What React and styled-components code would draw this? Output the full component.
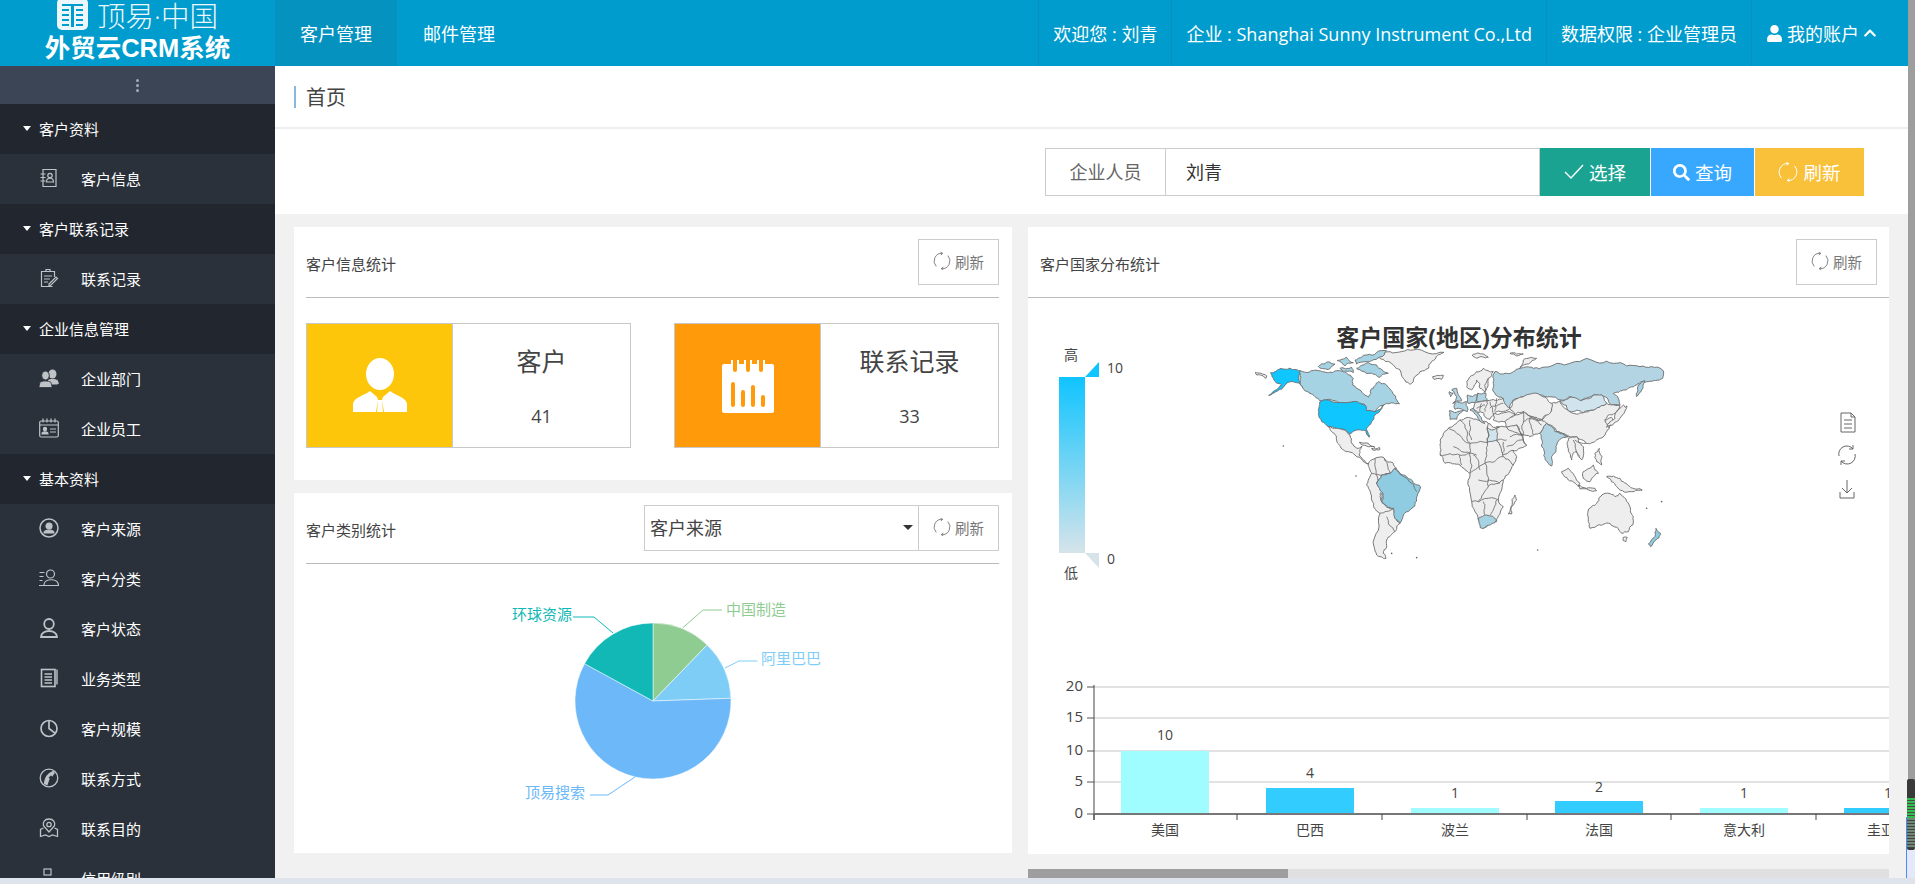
import React from "react";
import styled, { createGlobalStyle } from "styled-components";
import { FaSearch, FaUser, FaChevronUp } from "react-icons/fa";

const GlobalStyle = createGlobalStyle`
  html, body {
    margin: 0;
    height: 100%;
    overflow: hidden;
    background: #dfe3ec;
    font-family: "Open Sans", "Noto Sans CJK SC", sans-serif;
  }
  * { box-sizing: border-box; }
  svg text { font-family: "Open Sans", "Noto Sans CJK SC", sans-serif; }
`;

const Frame = styled.div`
  width: 1915px;
  height: 884px;
  display: flex;
  flex-direction: column;
  overflow: hidden;
`;
const Shell = styled.div`
  flex: 1;
  min-height: 0;
  display: flex;
`;
const Window = styled.div`
  width: 1908px;
  display: flex;
  flex-direction: column;
`;
const Rail = styled.div`
  width: 7px;
  background: #9e9e9e;
  position: relative;
`;
const RailBox = styled.div`
  position: absolute;
  left: -2px;
  right: 0;
  top: 817px;
  bottom: 0;
  background: #e3e9fa;
  border-left: 1px solid #4a8cf0;
`;
const RailThumb = styled.div`
  position: absolute;
  left: -1px;
  right: 0;
  top: 779px;
  height: 71px;
  border-radius: 2px;
  background:
    repeating-linear-gradient(#2fc04e 0 2px, #4b4b4b 2px 3px) 0 19px / 100% 20px no-repeat,
    repeating-linear-gradient(#6f8a74 0 2px, #444 2px 3px) 0 39px / 100% 30px no-repeat,
    #3a3a3a;
`;
const BottomBar = styled.div`
  height: 6px;
  background: #dfe3ec;
`;

/* top bar */
const Header = styled.header`
  height: 66px;
  flex: none;
  display: flex;
  background: #009ccd;
  color: #fff;
`;
const Brand = styled.div`
  width: 275px;
  display: flex;
  flex-direction: column;
  align-items: center;
`;
const BrandTop = styled.div`
  display: flex;
  align-items: flex-start;
  gap: 9px;
  height: 31px;
  font-size: 28.5px;
  line-height: 32px;
  font-weight: 300;
  opacity: 0.92;
`;
const BrandName = styled.div`
  font-size: 25.5px;
  line-height: 34px;
  font-weight: 700;
  white-space: nowrap;
  font-family: "Liberation Sans", "Noto Sans CJK SC", sans-serif;
`;
const NavTab = styled.div`
  width: ${(p) => p.$w}px;
  display: flex;
  align-items: center;
  justify-content: center;
  font-size: 18px;
  background: ${(p) => (p.$active ? "#0592bf" : "transparent")};
`;
const HeaderRight = styled.div`
  margin-left: auto;
  display: flex;
`;
const HeaderCell = styled.div`
  display: flex;
  align-items: center;
  gap: 4px;
  padding: 0 ${(p) => p.$right || 14}px 0 14px;
  font-size: 18px;
  white-space: nowrap;
  border-left: 1px solid #0a8fbb;
`;

/* sidebar */
const Body = styled.div`
  flex: 1;
  min-height: 0;
  display: flex;
`;
const Sidebar = styled.aside`
  width: 275px;
  flex: none;
  overflow: hidden;
  background: #2a313a;
`;
const SideToggle = styled.div`
  height: 38px;
  background: #3b4556;
  display: flex;
  flex-direction: column;
  align-items: center;
  justify-content: center;
  gap: 2px;
  span {
    width: 3px;
    height: 3px;
    border-radius: 50%;
    background: #a3abb8;
  }
`;
const SideGroup = styled.div`
  height: 50px;
  display: flex;
  align-items: center;
  background: #22262e;
  color: #fff;
  font-size: 15px;
  padding: 0 0 2px 23px;
  gap: 8px;
  &::before {
    content: "";
    border-left: 4.5px solid transparent;
    border-right: 4.5px solid transparent;
    border-top: 5px solid #fff;
  }
`;
const SideItem = styled.div`
  height: 50px;
  display: flex;
  align-items: center;
  color: #fff;
  font-size: 15px;
  padding: 0 0 2px 39px;
  gap: 22px;
  svg { width: 20px; height: 20px; flex: none; color: #bfc3c8; }
`;

/* main */
const Main = styled.main`
  flex: 1;
  min-width: 0;
  display: flex;
  flex-direction: column;
  background: #f1f1f1;
`;
const TitleBar = styled.div`
  height: 63px;
  flex: none;
  background: #fff;
  border-bottom: 2px solid #eceef2;
  padding: 20px 0 0 19px;
`;
const PageTitle = styled.div`
  height: 22px;
  border-left: 2px solid #86b8e0;
  padding-left: 10px;
  font-size: 20px;
  line-height: 24px;
  color: #444;
`;
const FilterBar = styled.div`
  height: 85px;
  flex: none;
  background: #fff;
  display: flex;
  justify-content: flex-end;
  align-items: flex-start;
  padding: 19px 43px 0 0;
`;
const InputGroup = styled.div`
  display: flex;
  height: 48px;
  width: 495px;
  border: 1px solid #ccc;
  font-size: 18px;
`;
const InputLabel = styled.div`
  width: 120px;
  display: flex;
  align-items: center;
  justify-content: center;
  padding-bottom: 2px;
  color: #666;
  border-right: 1px solid #ccc;
`;
const InputValue = styled.div`
  flex: 1;
  display: flex;
  align-items: center;
  padding: 0 0 2px 20px;
  color: #333;
`;
const ActionButton = styled.div`
  width: ${(p) => p.$w}px;
  height: 48px;
  margin-right: 1px;
  display: flex;
  align-items: center;
  justify-content: center;
  gap: 5px;
  color: #fff;
  font-size: 18.5px;
  background: ${(p) => p.$bg};
`;
const Columns = styled.div`
  flex: 1;
  min-height: 0;
  display: flex;
  gap: 16px;
  padding: 13px 19px 0;
`;
const LeftColumn = styled.div`
  width: 718px;
  flex: none;
  display: flex;
  flex-direction: column;
  gap: 13px;
`;
const RightColumn = styled.div`
  flex: 1;
  min-width: 0;
  display: flex;
  flex-direction: column;
`;
const Panel = styled.section`
  background: #fff;
  height: ${(p) => p.$h}px;
  padding: ${(p) => (p.$flush ? "0" : "0 13px 0 12px")};
  overflow: hidden;
`;
const PanelHead = styled.div`
  height: 71px;
  display: flex;
  align-items: center;
  border-bottom: 1px solid #bbb;
  padding: ${(p) => (p.$flush ? "0 12px" : "0")};
`;
const PanelTitle = styled.div`
  font-size: 15px;
  color: #444;
  margin-top: 3px;
  margin-right: auto;
`;
const Refresh = styled.div`
  width: 81px;
  height: 46px;
  display: flex;
  align-items: center;
  justify-content: center;
  gap: 4px;
  padding-bottom: 2px;
  border: 1px solid #ccc;
  color: #777;
  font-size: 14.5px;
`;
const SelectBox = styled.div`
  width: 274px;
  height: 46px;
  display: flex;
  align-items: center;
  justify-content: space-between;
  padding: 0 5px 2px;
  border: 1px solid #ccc;
  border-right: none;
  font-size: 18px;
  color: #444;
  &::after {
    content: "";
    border-left: 5px solid transparent;
    border-right: 5px solid transparent;
    border-top: 5px solid #333;
  }
`;
const StatRow = styled.div`
  display: flex;
  justify-content: space-between;
  margin-top: 25px;
`;
const StatCard = styled.div`
  width: 325px;
  height: 125px;
  display: flex;
  border: 1px solid #c8c8c8;
`;
const StatIcon = styled.div`
  width: 146px;
  flex: none;
  display: flex;
  align-items: center;
  justify-content: center;
  background: ${(p) => p.$bg};
  border-right: 1px solid #c8c8c8;
`;
const StatText = styled.div`
  flex: 1;
  display: flex;
  flex-direction: column;
  align-items: center;
  color: #444;
  padding-top: 19px;
`;
const StatLabel = styled.div`
  font-size: 25px;
  line-height: 36px;
`;
const StatValue = styled.div`
  font-size: 18px;
  line-height: 24px;
  margin-top: 25px;
`;
const ChartSvg = styled.svg`
  display: block;
`;
const HScrollTrack = styled.div`
  height: 9px;
  margin-top: 15px;
  background: #e0e0e0;
`;
const HScrollThumb = styled.div`
  width: 260px;
  height: 100%;
  background: #9e9e9e;
`;

const RefreshIcon = ({ size = 18, color = "#777" }) => (
  <svg width={size} height={size} viewBox="0 0 18 18" fill="none" stroke={color} strokeWidth="0.9">
    <path d="M3.2 14.4A7.800 7.800 0 0 1 9.500 1.300" />
    <path d="M14.800 3.600A7.800 7.800 0 0 1 8.500 16.700" />
    <path d="M7.600 0.300 9.800 1.400 7.800 3" />
    <path d="M10.400 15 8.200 16.600 10.200 17.700" />
  </svg>
);

const LogoMark = () => (
  <svg width="31" height="31" viewBox="0 0 31 31">
    <rect x="0" y="-2" width="31" height="32" rx="5" fill="#fff" />
    <path d="M5 5h21M5 10h7M19 10h7M5 15h7M19 15h7M5 20h7M19 20h7M5 25h7M19 25h7" stroke="#009ccd" strokeWidth="2.2" />
    <path d="M14 5v22h3V5" fill="#009ccd" />
  </svg>
);

/* sidebar drawings, all on a 20 box */
const stroke = { fill: "none", stroke: "currentColor", strokeWidth: 1.2 };
const icons = {
  book: (
    <svg viewBox="0 0 20 20" {...stroke}>
      <path d="M4 1.500h13v17H4zM1.500 6h5M1.500 9.500h5M1.500 13h5" />
      <circle cx="11" cy="7.500" r="2.200" />
      <path d="M7.500 14c0-5 7-5 7 0z" />
    </svg>
  ),
  clipboard: (
    <svg viewBox="0 0 20 20" {...stroke}>
      <path d="M15.500 9V3.500H2.500v15h11M7 3.500V1.500h4v2H7" />
      <path d="M5 8h8M5 11h6M5 14h4M10 16l7-7 1.500 1.500-7 7H10z" />
    </svg>
  ),
  team: (
    <svg viewBox="0 0 20 20" fill="currentColor">
      <ellipse cx="13.500" cy="6" rx="4" ry="4.500" />
      <path d="M9 12c1-1.500 8-1.500 9.500 0l1.500 3.500-2 1h-9z" />
      <ellipse cx="6.500" cy="7.500" rx="3.800" ry="4.500" stroke="#2a313a" />
      <path d="M0 18.500l1-4c.8-2 9.500-2 11 0l1 4-1 1H1z" stroke="#2a313a" strokeWidth="0.800" />
    </svg>
  ),
  badge: (
    <svg viewBox="0 0 20 20" {...stroke}>
      <rect x="0.700" y="3" width="18.600" height="16" rx="1.500" />
      <path d="M1 7h18M4 0.500v4M8 0.500v4M12 0.500v4M16 0.500v4M11 11h6M11 14h6" />
      <circle cx="6" cy="11" r="1.600" fill="currentColor" />
      <path d="M3 16c0-3 6-3 6 0z" fill="currentColor" />
    </svg>
  ),
  source: (
    <svg viewBox="0 0 20 20" {...stroke}>
      <circle cx="10" cy="10" r="9" strokeWidth="1.500" />
      <circle cx="10" cy="8" r="3" fill="currentColor" />
      <path d="M5 15c0-4 10-4 10 0z" fill="currentColor" />
    </svg>
  ),
  sort: (
    <svg viewBox="0 0 20 20" {...stroke}>
      <circle cx="11.500" cy="6" r="4" />
      <path d="M5 17c0-7 14-7 14.500 0M0 17.500h20M0.500 4.500h5M0.500 8.500h4M0.500 12.500h3" />
    </svg>
  ),
  person: (
    <svg viewBox="0 0 20 20" fill="none" stroke="currentColor" strokeWidth="1.800">
      <ellipse cx="10" cy="6" rx="4.800" ry="5" />
      <path d="M2 19c0-8 16-8 16 0z" />
    </svg>
  ),
  doc: (
    <svg viewBox="0 0 20 20" {...stroke}>
      <rect x="2.500" y="1.500" width="13.500" height="17" strokeWidth="1.600" />
      <path d="M18 1.500v15M5.500 6h7.500M5.500 9h7.500M5.500 12h7.500M5.500 15h7.500" strokeWidth="1.400" />
    </svg>
  ),
  pie: (
    <svg viewBox="0 0 20 20" fill="none" stroke="currentColor" strokeWidth="1.700">
      <circle cx="10" cy="10.500" r="8" />
      <path d="M10 2.500v8l6 4.600" />
    </svg>
  ),
  phone: (
    <svg viewBox="0 0 20 20" fill="none" stroke="currentColor" strokeWidth="1.300">
      <circle cx="10" cy="10" r="8.800" />
      <path d="M14 3.500C9 5.500 6 10 5.500 15.500l2.500 1c1-3 1.500-4.500 2-5.500l-1.300-1c1-1.800 2-2.800 3.400-3.600l1 1.200 2-2.600z" fill="currentColor" />
    </svg>
  ),
  target: (
    <svg viewBox="0 0 20 20" fill="none" stroke="currentColor" strokeWidth="1.300">
      <path d="M10 1c4.500 0 6.500 3.400 5.500 6.800L10 14 4.500 7.800C3.500 4.400 5.500 1 10 1z" />
      <circle cx="10" cy="6.500" r="2.200" />
      <path d="M4.500 10 1.500 11.500v7l5-1.500 3.500 1.500 3.500-1.500 5 1.500v-7L15.500 10" />
    </svg>
  ),
  level: (
    <svg viewBox="0 0 20 20" {...stroke}>
      <rect x="5" y="1" width="7" height="6" />
      <path d="M2 12h16v7H2z" />
    </svg>
  ),
};

const menu = [
  { group: "客户资料", items: [["book", "客户信息"]] },
  { group: "客户联系记录", items: [["clipboard", "联系记录"]] },
  { group: "企业信息管理", items: [["team", "企业部门"], ["badge", "企业员工"]] },
  {
    group: "基本资料",
    items: [
      ["source", "客户来源"],
      ["sort", "客户分类"],
      ["person", "客户状态"],
      ["doc", "业务类型"],
      ["pie", "客户规模"],
      ["phone", "联系方式"],
      ["target", "联系目的"],
      ["level", "信用级别"],
    ],
  },
];

const polar = (deg, r = 78) => {
  const a = (deg * Math.PI) / 180;
  return [653 + r * Math.sin(a), 701 - r * Math.cos(a)];
};
const slice = (from, to) => {
  const [x1, y1] = polar(from);
  const [x2, y2] = polar(to);
  return `M653 701L${x1} ${y1}A78 78 0 ${to - from > 180 ? 1 : 0} 1 ${x2} ${y2}Z`;
};
const pieData = [
  { name: "中国制造", from: 0, to: 44, color: "#8fcc92", line: "682.500,628 703,610 722,610", x: 726, y: 615 },
  { name: "阿里巴巴", from: 44, to: 88, color: "#7ecdf7", line: "725,668 739,661 757.500,661", x: 761, y: 664 },
  { name: "顶易搜索", from: 88, to: 298.6, color: "#6cb8f8", line: "635,777 608,795 590,795", x: 525, y: 798 },
  { name: "环球资源", from: 298.6, to: 360, color: "#11b8b5", line: "613,633 594,617 573,617", x: 512, y: 620 },
];

const PieChart = () => (
  <ChartSvg width="693" height="289" viewBox="306 564 693 289">
    {pieData.map((d) => (
      <g key={d.name}>
        <path d={slice(d.from, d.to)} fill={d.color} stroke="#fff" strokeWidth="0.5" />
        <polyline points={d.line} fill="none" stroke={d.color} strokeWidth="1" />
        <text x={d.x} y={d.y} fontSize="15" fill={d.color}>{d.name}</text>
      </g>
    ))}
  </ChartSvg>
);

/* map shapes, drawn on a 3x grid of the chart area */
const GREY = "#eeeeee";
const HOT = "#0fc6ff";
const MID = "#8fcce2";
const SOFT = "#a6d3e3";
const PALE = "#b3d5e3";
const FAINT = "#cfe4ec";
const countries = [
  [GREY, "M410,45L450,35L520,30L612,37L585,58L565,85L540,95L520,125L510,133L490,115L480,90L455,70L420,55Z"],
  [HOT, "M92,98L120,86L150,84L180,92L180,132L210,160L190,143L170,128L150,125L135,135L125,148L100,160L86,166L110,150L125,135L108,128L98,112Z"],
  [SOFT, "M180,92L235,92L262,98L290,92L320,100L340,115L338,135L360,150L385,172L393,148L415,125L445,142L470,180L478,192L450,190L430,195L405,215L380,212L375,195L340,185L240,183L225,170L210,160L180,132Z"],
  [SOFT, "M235,80L262,66L285,72L270,86ZM292,62L320,52L340,68L315,78ZM345,60L380,45L440,32L395,62L350,72ZM350,85L385,68L410,75L445,100L420,112L390,100ZM300,85L335,82L340,98L310,96Z"],
  [HOT, "M240,185L340,185L375,195L380,212L405,215L430,195L425,207L405,225L395,245L380,265L388,292L378,272L350,270L330,282L315,270L290,265L265,260L245,245L236,215Z"],
  [GREY, "M265,260L290,265L315,270L330,285L335,310L350,325L366,318L358,345L385,372L370,365L345,345L310,330L290,300L272,272Z"],
  [GREY, "M358,307L385,310L405,322L380,318ZM395,325L418,322L420,328L398,330Z"],
  [GREY, "M385,372L405,355L430,352L460,370L470,385L450,400L425,405L410,430L425,455L425,485L460,505L465,535L480,550L465,575L440,600L430,640L438,655L410,645L402,620L420,520L395,480L380,435L395,400Z"],
  [FAINT, "M425,460L455,480L462,505L425,487Z"],
  [MID, "M410,430L425,405L450,400L465,385L490,405L515,420L541,440L530,480L510,510L490,525L480,550L465,535L460,505L425,485L425,455Z"],
  [GREY, "M600,315L625,265L660,240L695,235L745,250L790,265L800,300L830,350L820,375L790,420L775,480L790,500L770,545L730,565L715,540L695,485L690,400L660,375L615,370L600,345Z"],
  [FAINT, "M742,262L778,268L790,306L742,308Z"],
  [SOFT, "M715,535L740,525L770,540L765,548L730,565L720,562Z"],
  [GREY, "M805,522L825,465L830,480L815,522Z"],
  [PALE, "M635,150L650,145L665,182L638,190L650,170ZM628,155L640,160L632,170Z"],
  [PALE, "M645,185L680,185L682,215L645,208Z"],
  [PALE, "M628,212L670,210L650,238L630,238Z"],
  [GREY, "M680,140L690,110L730,85L760,95L745,115L735,155L720,145L710,120L695,150Z"],
  [PALE, "M682,165L712,165L708,187L684,190Z"],
  [PALE, "M712,160L738,160L742,182L710,182Z"],
  [GREY, "M708,187L742,182L790,175L810,205L770,215L750,238L730,218L700,205Z"],
  [PALE, "M690,210L700,205L725,238L735,250L718,240Z"],
  [GREY, "M760,222L810,215L825,225L795,245L760,240Z"],
  [PALE, "M760,130L765,95L800,100L840,85L880,85L950,70L1040,55L1120,70L1200,80L1268,90L1268,115L1225,125L1190,135L1150,150L1120,160L1135,175L1140,195L1115,195L1105,180L1085,165L1060,165L1025,180L990,170L960,180L900,165L850,170L820,180L810,205L790,175L775,170L760,155Z"],
  [FAINT, "M960,183L990,172L1025,182L1060,165L1085,165L1100,190L1070,205L1030,218L990,215Z"],
  [GREY, "M935,190L960,183L990,215L1030,218L1070,205L1100,190L1115,195L1140,195L1130,215L1105,225L1095,240L1110,255L1100,275L1070,300L1040,310L1010,290L980,285L950,275L920,250L905,240L935,210Z"],
  [GREY, "M820,180L850,170L900,165L935,190L935,210L905,240L870,228L850,215L825,225L810,205Z"],
  [GREY, "M795,245L825,225L850,215L870,228L905,240L920,250L900,280L870,290L850,285L830,255L800,262Z"],
  [GREY, "M770,262L800,262L830,255L850,300L860,315L830,332L790,345L770,300Z"],
  [PALE, "M900,280L920,250L945,275L985,290L965,295L950,315L935,350L935,378L925,370L905,320Z"],
  [GREY, "M985,295L1010,290L1030,320L1025,360L1005,335L995,360L985,330Z"],
  [GREY, "M1095,240L1115,232L1125,245L1105,262Z"],
  [GREY, "M1140,205L1150,195L1160,205L1130,245L1100,262L1125,235Z"],
  [SOFT, "M1190,170L1195,135L1215,122L1205,150Z"],
  [GREY, "M965,395L985,385L1020,430L1015,440L985,420ZM1030,395L1060,375L1075,400L1050,425L1030,415ZM1065,340L1078,325L1085,375L1070,365ZM1100,410L1140,415L1170,440L1205,450L1170,455L1130,440ZM1015,435L1065,445L1070,452L1020,447Z"],
  [GREY, "M1045,510L1070,490L1095,460L1125,470L1140,460L1170,500L1180,530L1165,575L1145,580L1110,550L1075,555L1050,565Z"],
  [GREY, "M1150,592L1162,592L1158,605L1150,602ZM45,98L80,108L78,115L50,105ZM578,110L610,106L605,118L582,118ZM697,45L730,42L745,52L710,55ZM850,60L890,55L840,85ZM810,40L850,42L830,48Z"],
  [MID, "M1225,612L1245,590L1248,565L1262,580L1245,602L1232,620Z"],
];
const borders = [
  "M530,455L465,385", "M405,355L410,430", "M395,400L425,405", "M430,352L450,400", "M420,520L460,505",
  "M465,575L440,530", "M625,265L690,310L690,400", "M660,240L690,310L742,308L742,262", "M600,345L660,345L690,340",
  "M742,308L735,370L690,400", "M790,306L790,350L735,370", "M790,350L820,375", "M695,485L775,480", "M715,420L780,430",
  "M735,370L745,440L715,485", "M640,320L710,345", "M745,440L790,420", "M730,485L735,525", "M770,480L750,525",
  "M800,300L770,300", "M690,240L695,300", "M745,250L742,262", "M830,255L860,315", "M800,262L850,285",
  "M1000,300L1015,350", "M870,228L905,255", "M850,215L850,285", "M735,160L745,115", "M725,190L720,215", "M750,185L760,222",
  "M742,182L735,215", "M770,175L765,215", "M790,190L750,205", "M710,205L735,195", "M850,245L905,240", "M870,228L880,285",
  "M810,290L850,285", "M800,320L850,300", "M1005,300L1040,310", "M950,275L985,290", "M700,345L720,390", "M660,345L665,375",
];
const dots = [[130, 318], [348, 408], [893, 630], [530, 653], [455, 640], [1220, 505], [1265, 485], [1205, 450], [1160, 200]];

// rough up straight edges; the offset depends only on the edge, so neighbours still meet
const edgeOffset = (a, b) => {
  const key = a[0] < b[0] || (a[0] === b[0] && a[1] < b[1]) ? [a, b] : [b, a];
  const n = Math.sin(key[0][0] * 12.9898 + key[0][1] * 78.233 + key[1][0] * 37.719 + key[1][1] * 11.131) * 43758.5453;
  return (n - Math.floor(n) - 0.5) * 2;
};
const roughEdge = (a, b, depth) => {
  const len = Math.hypot(b[0] - a[0], b[1] - a[1]);
  if (depth === 0 || len < 7) return [b];
  const off = edgeOffset(a, b) * Math.min(len * 0.16, 7);
  const mid = [
    Math.round(((a[0] + b[0]) / 2 - ((b[1] - a[1]) / len) * off) * 10) / 10,
    Math.round(((a[1] + b[1]) / 2 + ((b[0] - a[0]) / len) * off) * 10) / 10,
  ];
  return [...roughEdge(a, mid, depth - 1), ...roughEdge(mid, b, depth - 1)];
};
const roughen = (d) =>
  d
    .split("M")
    .filter(Boolean)
    .map((part) => {
      const closed = part.endsWith("Z");
      const pts = part.replace("Z", "").split("L").map((p) => p.split(",").map(Number));
      const out = [pts[0]];
      const ring = closed ? [...pts, pts[0]] : pts;
      for (let i = 0; i < ring.length - 1; i++) out.push(...roughEdge(ring[i], ring[i + 1], 3));
      return "M" + out.map((p) => p.join(",")).join("L") + (closed ? "Z" : "");
    })
    .join("");

const WorldMap = () => (
  <g transform="translate(1240 340) scale(0.3333)" strokeLinejoin="round">
    {countries.map(([fill, d], i) => (
      <path key={i} d={roughen(d)} fill={fill} stroke="#6e6e6e" strokeWidth="2.800" />
    ))}
    <path d={roughen(borders.join(""))} fill="none" stroke="#6e6e6e" strokeWidth="2.600" />
    {dots.map(([x, y]) => (
      <circle key={x} cx={x} cy={y} r="2.500" fill="#666" />
    ))}
  </g>
);

const MapChart = () => (
  <ChartSvg width="861" height="362" viewBox="1028 298 861 362">
    <defs>
      <linearGradient id="scale" x1="0" y1="0" x2="0" y2="1">
        <stop offset="0" stopColor="#0fc4ff" />
        <stop offset="1" stopColor="#d6e4ea" />
      </linearGradient>
    </defs>
    <WorldMap />
    <text x="1459" y="346" textAnchor="middle" fontSize="23" fontWeight="700" fill="#333">客户国家(地区)分布统计</text>
    <rect x="1059" y="377" width="26" height="176" fill="url(#scale)" />
    <path d="M1085 377h14v-15z" fill="#0fc4ff" />
    <path d="M1085 553h14v15z" fill="#d6e4ea" />
    <g fontSize="14" fill="#444">
      <text x="1071" y="360" textAnchor="middle">高</text>
      <text x="1071" y="578" textAnchor="middle">低</text>
      <text x="1107" y="373">10</text>
      <text x="1107" y="564">0</text>
    </g>
    <g fill="none" stroke="#666" strokeWidth="1">
      <path d="M1841 413h10l4 4v15h-14zM1851 413v4h4M1844 420h8M1844 424h8M1844 428h8" />
      <path d="M1839 456A8 8 0 0 1 1853 449M1855 454A8 8 0 0 1 1841 461M1853 445v4h-4M1841 465v-4h4" />
      <path d="M1847 480v13M1842 488l5 5 5-5M1840 492v6h14v-6" />
    </g>
  </ChartSvg>
);

const yTicks = [[20, 687], [15, 718], [10, 751], [5, 782], [0, 814]];
const bars = [
  { name: "美国", v: 10, x: 1121, top: 751, color: "#9ffcff", label: 740 },
  { name: "巴西", v: 4, x: 1266, top: 788, color: "#33ccff", label: 778 },
  { name: "波兰", v: 1, x: 1411, top: 808, color: "#9ffcff", label: 798 },
  { name: "法国", v: 2, x: 1555, top: 801, color: "#33ccff", label: 792 },
  { name: "意大利", v: 1, x: 1700, top: 808, color: "#9ffcff", label: 798 },
  { name: "圭亚那", v: 1, x: 1844, top: 808, color: "#33ccff", label: 798 },
];
const xTicks = [1094, 1237, 1382, 1527, 1671, 1816];

const BarChart = () => (
  <ChartSvg width="861" height="194" viewBox="1028 660 861 194">
    {yTicks.map(([v, y]) => (
      <g key={v}>
        <line x1="1094" x2="1889" y1={y} y2={y} stroke="#e2e2e2" strokeWidth="2" />
        <line x1="1087" x2="1094" y1={y} y2={y} stroke="#555" />
        <text x="1083" y={y + 4} textAnchor="end" fontSize="15" fill="#444">{v}</text>
      </g>
    ))}
    <line x1="1094" x2="1094" y1="685" y2="820" stroke="#444" />
    {bars.map((b) => (
      <g key={b.name}>
        <rect x={b.x} y={b.top} width="88" height={814 - b.top} fill={b.color} />
        <text x={b.x + 44} y={b.label} textAnchor="middle" fontSize="14" fill="#444">{b.v}</text>
        <text x={b.x + 44} y="835" textAnchor="middle" fontSize="14" fill="#444">{b.name}</text>
      </g>
    ))}
    <line x1="1094" x2="1889" y1="814" y2="814" stroke="#777" strokeWidth="2" />
    {xTicks.map((x) => (
      <line key={x} x1={x} x2={x} y1="814" y2="820" stroke="#444" />
    ))}
  </ChartSvg>
);

const RefreshButton = () => (
  <Refresh>
    <RefreshIcon />
    刷新
  </Refresh>
);

export default function App() {
  return (
    <Frame>
      <GlobalStyle />
      <Shell>
        <Window>
          <Header>
            <Brand>
              <BrandTop>
                <LogoMark />
                <span>顶易·中国</span>
              </BrandTop>
              <BrandName>外贸云CRM系统</BrandName>
            </Brand>
            <NavTab $w={122} $active>客户管理</NavTab>
            <NavTab $w={124}>邮件管理</NavTab>
            <HeaderRight>
              <HeaderCell>欢迎您 : 刘青</HeaderCell>
              <HeaderCell>企业 : Shanghai Sunny Instrument Co.,Ltd</HeaderCell>
              <HeaderCell>数据权限 : 企业管理员</HeaderCell>
              <HeaderCell $right={31}>
                <FaUser size={17} />
                我的账户
                <FaChevronUp size={14} />
              </HeaderCell>
            </HeaderRight>
          </Header>
          <Body>
            <Sidebar>
              <SideToggle>
                <span />
                <span />
                <span />
              </SideToggle>
              {menu.map((m) => (
                <div key={m.group}>
                  <SideGroup>{m.group}</SideGroup>
                  {m.items.map(([icon, label]) => (
                    <SideItem key={label}>
                      {icons[icon]}
                      {label}
                    </SideItem>
                  ))}
                </div>
              ))}
            </Sidebar>
            <Main>
              <TitleBar>
                <PageTitle>首页</PageTitle>
              </TitleBar>
              <FilterBar>
                <InputGroup>
                  <InputLabel>企业人员</InputLabel>
                  <InputValue>刘青</InputValue>
                </InputGroup>
                <ActionButton $w={110} $bg="#1ba392">
                  <svg width="20" height="16" viewBox="0 0 20 16" fill="none" stroke="#fff" strokeWidth="1.400">
                    <path d="M1 8l6 6L19 1" />
                  </svg>
                  选择
                </ActionButton>
                <ActionButton $w={103} $bg="#38a8ff">
                  <FaSearch size={17} />
                  查询
                </ActionButton>
                <ActionButton $w={109} $bg="#f9c03a">
                  <RefreshIcon size={20} color="#fff" />
                  刷新
                </ActionButton>
              </FilterBar>
              <Columns>
                <LeftColumn>
                  <Panel $h={253}>
                    <PanelHead>
                      <PanelTitle>客户信息统计</PanelTitle>
                      <RefreshButton />
                    </PanelHead>
                    <StatRow>
                      <StatCard>
                        <StatIcon $bg="#fec60a">
                          <svg width="56" height="56" viewBox="0 0 56 56" fill="#fff">
                            <ellipse cx="28" cy="16" rx="14" ry="16" />
                            <path d="M1 54V46c0-6 12-9 17-13l7 6 1 3-2 12zM55 54V46c0-6-12-9-17-13l-7 6-1 3 2 12zM26 42h4l1 12h-6z" />
                          </svg>
                        </StatIcon>
                        <StatText>
                          <StatLabel>客户</StatLabel>
                          <StatValue>41</StatValue>
                        </StatText>
                      </StatCard>
                      <StatCard>
                        <StatIcon $bg="#ff9a0a">
                          <svg width="52" height="54" viewBox="0 0 52 54">
                            <rect x="0" y="5" width="52" height="49" rx="2" fill="#fff" />
                            <path d="M10 1v10a3 3 0 0 0 6 0V1M23 1v10a3 3 0 0 0 6 0V1M36 1v10a3 3 0 0 0 6 0V1" fill="none" stroke="#fff" strokeWidth="2" />
                            <path d="M11 0v11a2 2 0 0 0 4 0V0zM24 0v11a2 2 0 0 0 4 0V0zM37 0v11a2 2 0 0 0 4 0V0z" fill="#ff9a0a" />
                            <g stroke="#ff9a0a" strokeWidth="4" strokeLinecap="round">
                              <path d="M11 25v21M21 33v13M31 28v18M41 38v8" />
                            </g>
                          </svg>
                        </StatIcon>
                        <StatText>
                          <StatLabel>联系记录</StatLabel>
                          <StatValue>33</StatValue>
                        </StatText>
                      </StatCard>
                    </StatRow>
                  </Panel>
                  <Panel $h={360}>
                    <PanelHead>
                      <PanelTitle>客户类别统计</PanelTitle>
                      <SelectBox>客户来源</SelectBox>
                      <RefreshButton />
                    </PanelHead>
                    <PieChart />
                  </Panel>
                </LeftColumn>
                <RightColumn>
                  <Panel $h={627} $flush>
                    <PanelHead $flush>
                      <PanelTitle>客户国家分布统计</PanelTitle>
                      <RefreshButton />
                    </PanelHead>
                    <MapChart />
                    <BarChart />
                  </Panel>
                  <HScrollTrack>
                    <HScrollThumb />
                  </HScrollTrack>
                </RightColumn>
              </Columns>
            </Main>
          </Body>
        </Window>
        <Rail>
          <RailBox />
          <RailThumb />
        </Rail>
      </Shell>
      <BottomBar />
    </Frame>
  );
}
